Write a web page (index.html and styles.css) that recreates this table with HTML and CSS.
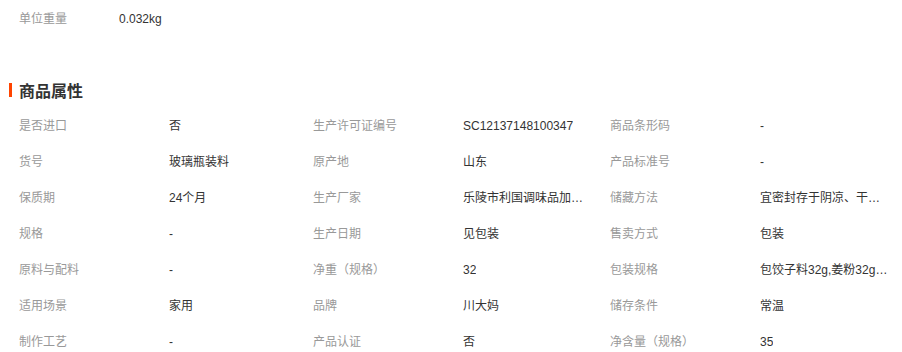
FILE: index.html
```html
<!DOCTYPE html>
<html lang="zh-CN">
<head>
<meta charset="utf-8">
<title>商品属性</title>
<link rel="stylesheet" href="styles.css">
</head>
<body>
<div class="basic">
  <span class="basic-label">单位重量</span>
  <span class="basic-value">0.032kg</span>
</div>
<h2 class="section-title"><span class="bar"></span>商品属性</h2>
<div class="attrs">
  <div class="cell"><span class="label">是否进口</span><span class="value">否</span></div>
  <div class="cell"><span class="label">生产许可证编号</span><span class="value">SC12137148100347</span></div>
  <div class="cell"><span class="label">商品条形码</span><span class="value">-</span></div>

  <div class="cell"><span class="label">货号</span><span class="value">玻璃瓶装料</span></div>
  <div class="cell"><span class="label">原产地</span><span class="value">山东</span></div>
  <div class="cell"><span class="label">产品标准号</span><span class="value">-</span></div>

  <div class="cell"><span class="label">保质期</span><span class="value">24个月</span></div>
  <div class="cell"><span class="label">生产厂家</span><span class="value">乐陵市利国调味品加工厂</span></div>
  <div class="cell"><span class="label">储藏方法</span><span class="value">宜密封存于阴凉、干燥处</span></div>

  <div class="cell"><span class="label">规格</span><span class="value">-</span></div>
  <div class="cell"><span class="label">生产日期</span><span class="value">见包装</span></div>
  <div class="cell"><span class="label">售卖方式</span><span class="value">包装</span></div>

  <div class="cell"><span class="label">原料与配料</span><span class="value">-</span></div>
  <div class="cell"><span class="label">净重（规格）</span><span class="value">32</span></div>
  <div class="cell"><span class="label">包装规格</span><span class="value">包饺子料32g,姜粉32g,花椒粉</span></div>

  <div class="cell"><span class="label">适用场景</span><span class="value">家用</span></div>
  <div class="cell"><span class="label">品牌</span><span class="value">川大妈</span></div>
  <div class="cell"><span class="label">储存条件</span><span class="value">常温</span></div>

  <div class="cell"><span class="label">制作工艺</span><span class="value">-</span></div>
  <div class="cell"><span class="label">产品认证</span><span class="value">否</span></div>
  <div class="cell"><span class="label">净含量（规格）</span><span class="value">35</span></div>
</div>
</body>
</html>
```
FILE: styles.css
```css
* { box-sizing: border-box; }
html, body { margin: 0; padding: 0; background: #fff; }
body {
  font-family: "Liberation Sans", "Noto Sans CJK SC", sans-serif;
  font-size: 12px;
  color: #333;
  overflow: hidden;
}
.basic {
  display: flex;
  padding: 10px 0 0 19px;
  line-height: 18px;
}
.basic-label { width: 100px; color: #999; }
.basic-value { color: #333; }

.section-title {
  display: flex;
  align-items: center;
  margin: 52px 0 0;
  padding-left: 9px;
  height: 20px;
  font-size: 16px;
  font-weight: bold;
  color: #333;
}
.bar {
  display: inline-block;
  width: 3px;
  height: 14px;
  background: #ff4400;
  margin-right: 7px;
}

.attrs {
  display: grid;
  grid-template-columns: 294px 297px 1fr;
  margin-top: 8px;
  padding-left: 19px;
}
.cell {
  display: flex;
  height: 36px;
  line-height: 37px;
}
.label {
  width: 150px;
  flex: none;
  color: #999;
}
.value {
  max-width: 130px;
  white-space: nowrap;
  overflow: hidden;
  text-overflow: ellipsis;
  color: #333;
}
```
